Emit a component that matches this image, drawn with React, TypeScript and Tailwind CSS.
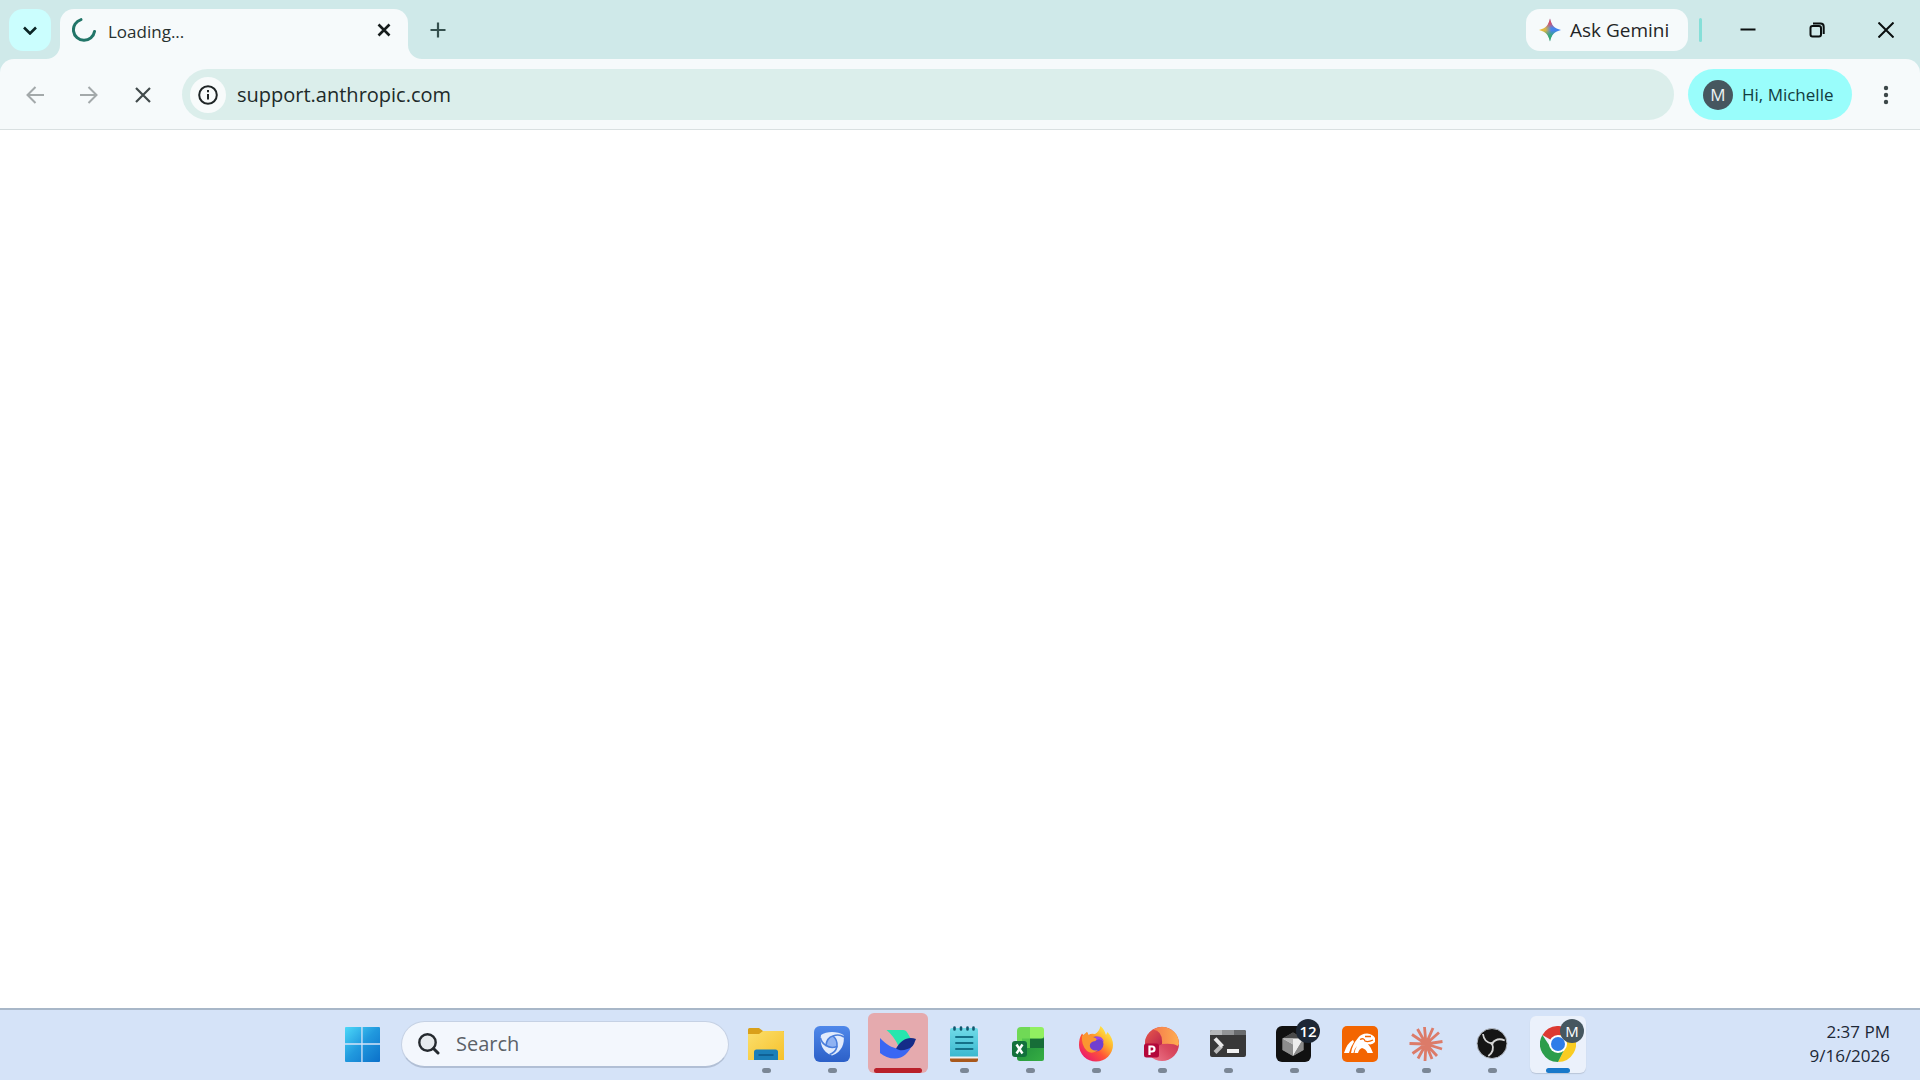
import React from 'react';

interface TaskbarApp {
  name: string;
  icon: React.ReactNode;
  badge?: string;
  state?: 'attention' | 'active';
}

function GeminiIcon() {
  return (
    <svg viewBox="0 0 22 24" className="h-6 w-[22px]">
      <defs>
        <linearGradient id="gem-y" x1="0" x2="1" y1="0" y2="0">
          <stop offset="0" stopColor="#f2c02c" />
          <stop offset="0.3" stopColor="#d8b548" />
          <stop offset="0.55" stopColor="#4a86e8" />
          <stop offset="1" stopColor="#3b7ff0" />
        </linearGradient>
        <linearGradient id="gem-r" x1="0" x2="0" y1="0" y2="1">
          <stop offset="0" stopColor="#ea4358" />
          <stop offset="0.2" stopColor="#d9506a" />
          <stop offset="0.42" stopColor="#d9506a" stopOpacity="0" />
        </linearGradient>
        <linearGradient id="gem-g" x1="0" x2="0" y1="1" y2="0">
          <stop offset="0" stopColor="#2fb457" />
          <stop offset="0.25" stopColor="#37a97c" />
          <stop offset="0.48" stopColor="#37a97c" stopOpacity="0" />
        </linearGradient>
      </defs>
      {['url(#gem-y)', 'url(#gem-r)', 'url(#gem-g)'].map((fill) => (
        <path key={fill} d="M11 0.5C12.2 7 15.5 10.6 22 12C15.5 13.4 12.2 17 11 23.5C9.8 17 6.5 13.4 0 12C6.5 10.6 9.8 7 11 0.5Z" fill={fill} />
      ))}
    </svg>
  );
}

function WindowsLogo() {
  return (
    <svg viewBox="0 0 36 36" className="size-9">
      <defs>
        <linearGradient id="win" x1="0" y1="0" x2="36" y2="36" gradientUnits="userSpaceOnUse">
          <stop offset="0" stopColor="#4fdcfa" />
          <stop offset="0.5" stopColor="#2199de" />
          <stop offset="1" stopColor="#0b70c9" />
        </linearGradient>
      </defs>
      <path fill="url(#win)" d="M2 1H17.300V17.300H1V2A1 1 0 0 1 2 1ZM18.600 1H35A1 1 0 0 1 36 2V17.300H18.600ZM1 18.800H17.300V36H2A1 1 0 0 1 1 35ZM18.600 18.800H36V35A1 1 0 0 1 35 36H18.600Z" />
    </svg>
  );
}

function FolderIcon() {
  return (
    <svg viewBox="0 0 36 36" className="size-9">
      <defs>
        <linearGradient id="fold" x1="0" y1="0" x2="1" y2="1">
          <stop offset="0" stopColor="#fbdf6c" />
          <stop offset="1" stopColor="#f6c12b" />
        </linearGradient>
      </defs>
      <path fill="#d9a01a" d="M0 3.500Q0 2 1.500 2H11L15 5H36V12H0Z" />
      <path fill="url(#fold)" d="M0 8H11L15 5H35Q36 5 36 6V34H0Z" />
      <path fill="#1b7fb8" d="M6 34V26Q6 23.500 8.500 23.500H27.500Q30 23.500 30 26V34Z" />
      <path stroke="#0d5688" strokeWidth="1.500" d="M10.500 29H25.500" />
    </svg>
  );
}

function ShieldIcon() {
  return (
    <svg viewBox="0 0 36 36" className="size-9">
      <defs>
        <linearGradient id="shield" x1="0" y1="0" x2="0" y2="1">
          <stop offset="0" stopColor="#4f88ea" />
          <stop offset="1" stopColor="#2c60c8" />
        </linearGradient>
      </defs>
      <rect width="36" height="36" rx="6" fill="url(#shield)" />
      <path fill="#e2ebfc" d="M18 6C22 6 27 7 29.500 9C31 17 28 26 18 29.500C8 26 5.500 17 7 9C9.500 7 14 6 18 6Z" />
      <g fill="none" stroke="#4a7edc" strokeWidth="1.600">
        <path fill="#8fb2f2" d="M12 19.500C12.500 14.500 15 11 19 10C22 12.500 23.500 16 23 20.500C19 22 15 21.500 12 19.500Z" />
        <path d="M19 10C23 8.500 27 9 30 11M23 20.500C22 25 19 27.500 15.500 28.500M12 19.500C9 17.500 7 15 6.500 12" />
      </g>
    </svg>
  );
}

function WingIcon() {
  return (
    <svg viewBox="0 0 36 36" className="size-9">
      <path fill="#27e6ae" d="M6.500 4H23Q26 4 27.500 7L31 13L19 21Q14 10 6.500 4Z" />
      <path fill="#3a67f3" d="M0 12C6 18.500 12 22 18 22.500C24 23 29 20 33 17C29 27 23 32.500 15 32.500C9 32.500 4 30.500 0 27Z" />
      <path fill="#142c88" d="M36 13C28 10 21 14 16 22.500C21 26 27 23.500 31 21.500C34 19.500 34.500 16 36 13Z" />
    </svg>
  );
}

function NotepadIcon() {
  return (
    <svg viewBox="0 0 36 36" className="size-9">
      <defs>
        <linearGradient id="note" x1="0" y1="0" x2="0" y2="1">
          <stop offset="0" stopColor="#70dbe8" />
          <stop offset="1" stopColor="#3bb8cf" />
        </linearGradient>
      </defs>
      <path fill="#a8581c" d="M4 31H32V34Q32 36 30 36H6Q4 36 4 34Z" />
      <path fill="#f3f0ee" d="M4 29H32V32.500H4Z" />
      <path fill="url(#note)" d="M4 4Q4 2 6 2H30Q32 2 32 4V30.500H4Z" />
      <path stroke="#13576e" strokeWidth="2.600" strokeLinecap="round" d="M8.500 1.500V3.500M15 1.500V3.500M21.500 1.500V3.500M27.500 1.500V3.500" />
      <path stroke="#147088" strokeWidth="2" strokeLinecap="round" d="M10 11H26.500M10 17H26.500M10 23H26.500" />
    </svg>
  );
}

function ExcelIcon() {
  return (
    <svg viewBox="0 0 36 36" className="size-9">
      <defs>
        <linearGradient id="xl" x1="0" y1="0" x2="1" y2="1">
          <stop offset="0" stopColor="#1d8a3c" />
          <stop offset="1" stopColor="#36ae43" />
        </linearGradient>
      </defs>
      <path fill="url(#xl)" d="M5 10H32V33Q32 35 30 35H8Q5 35 5 32Z" />
      <path fill="#176d38" d="M18 12.500H32V22H18Z" />
      <path fill="#70d956" d="M5 22V5Q5 1 9 1H18V22Z" />
      <path fill="#91f061" d="M18 1H29Q32 1 32 4V10Q32 12.500 29 12.500H18Z" />
      <path fill="#55c64e" d="M10 12.500H18V22H10Z" />
      <rect y="15" width="15" height="16" rx="3" fill="#12713c" />
      <path stroke="#fff" strokeWidth="2.400" d="M4.500 18.500L10.500 27.500M10.500 18.500L4.500 27.500" />
    </svg>
  );
}

function FirefoxIcon() {
  return (
    <svg viewBox="0 0 36 36" className="size-9">
      <defs>
        <linearGradient id="ff" x1="0.9" y1="0.1" x2="0.2" y2="0.9">
          <stop offset="0" stopColor="#fff04b" />
          <stop offset="0.35" stopColor="#ffae2b" />
          <stop offset="0.65" stopColor="#ff5338" />
          <stop offset="1" stopColor="#ed1f68" />
        </linearGradient>
      </defs>
      <path fill="url(#ff)" d="M4 7.500L6 10L9 6L10.500 9Q13 7 17 8Q21 6 22.500 0C26 3 27 6 28 9L29.500 6Q35 12 35 19A17 16.500 0 0 1 1 19Q1 12 4 7.500Z" />
      <circle cx="18" cy="18" r="7.500" fill="#7040cf" />
      <path fill="#fb9630" d="M4 10L9 6L10.500 9Q13 9 15 11L19.500 12.500Q18 15.500 15 15.500Q11 17 12 21Q14 25.500 20 24Q14 29 9 25Q3 19 4 10Z" />
      <path fill="#9b47e8" d="M17 11Q24 9 26 16Q22 12 19 14Z" />
    </svg>
  );
}

function PowerPointIcon() {
  return (
    <svg viewBox="0 0 36 36" className="size-9">
      <defs>
        <linearGradient id="pp" x1="0" y1="0" x2="1" y2="0">
          <stop offset="0" stopColor="#f47a4c" />
          <stop offset="1" stopColor="#ffae50" />
        </linearGradient>
        <linearGradient id="pp2" x1="0" y1="0" x2="0.8" y2="1">
          <stop offset="0" stopColor="#e85a4a" />
          <stop offset="1" stopColor="#b81f4e" />
        </linearGradient>
        <linearGradient id="pp3" x1="1" y1="0" x2="0" y2="1">
          <stop offset="0" stopColor="#c92648" />
          <stop offset="0.5" stopColor="#d94a60" />
          <stop offset="1" stopColor="#f28498" />
        </linearGradient>
      </defs>
      <circle cx="18" cy="18" r="17" fill="url(#pp3)" />
      <path fill="url(#pp)" d="M9 3.500A17 17 0 0 1 35 18L33.500 20Q30 17 18 18Z" />
      <path fill="url(#pp2)" d="M9 3.500Q19 5 18 18L3 26Q-3 11 9 3.500Z" />
      <rect y="17.500" width="15" height="14" rx="2.500" fill="#b4083b" />
      <path fill="none" stroke="#fff" strokeWidth="2.200" d="M5.500 29V20.500H8A2.400 2.400 0 0 1 8 25.500H5.500" />
    </svg>
  );
}

function TerminalIcon() {
  return (
    <svg viewBox="0 0 36 36" className="size-9">
      <rect y="4" width="36" height="27" rx="2" fill="#383838" />
      <path fill="#b5b7b9" d="M0 9V6Q0 4 2 4H12V9Z" />
      <path fill="#929496" d="M12 4H24V9H12Z" />
      <path fill="#696b6d" d="M24 4H34Q36 4 36 6V9H24Z" />
      <path fill="none" stroke="#b9b9b9" strokeWidth="4" d="M5 26.500L11.500 20" />
      <path fill="none" stroke="#e9e9e9" strokeWidth="4" d="M5 12.500L12.500 20.500" />
      <path fill="#f1f1f1" d="M17 23H29V27H17Z" />
    </svg>
  );
}

function CubeIcon() {
  return (
    <svg viewBox="0 0 36 36" className="size-9">
      <rect width="35" height="36" rx="6" fill="#111" />
      <path fill="#777" d="M17 6.500L27.500 12.500V24L17 30L6.500 24V12.500Z" />
      <path fill="#4a4a4a" d="M17 6.500L27.500 12.500H6.500Z" />
      <path fill="#8d8d8d" d="M6.500 12.500L17 19V30L6.500 24Z" />
      <path fill="#ededed" d="M6.500 12.500H27.500L17 30V18.500Z" />
      <path fill="#8a8a8a" d="M27.500 12.500V24L17 30Z" />
      <path fill="#b9b9b9" d="M6.500 12.500H17V18.500Z" />
    </svg>
  );
}

function BeastIcon() {
  return (
    <svg viewBox="0 0 36 36" className="size-9">
      <rect width="36" height="36" rx="5" fill="#f36500" />
      <path fill="#fff" d="M2 27Q5 17 11 14L12 16Q9 20 7 27Z" />
      <path fill="#fff" d="M9 27Q10 19 16 12Q19 7.500 25 7.500Q31 8 33 12V16Q30 19.500 26 18Q29.500 22 31 27H25.500Q24 23 20 22Q17 23 16 27H12.500Q13 23 15 20Q12 23 11.500 27Z" />
      <path fill="none" stroke="#f36500" strokeWidth="1.300" d="M18 13.500Q22 11.500 23 15Q26 16.500 31 14M23 10.500H29" />
    </svg>
  );
}

function BurstIcon() {
  return (
    <svg viewBox="0 0 36 36" className="size-9">
      <path
        stroke="#dc7b69"
        strokeWidth="2.800"
        d="M18 18L16.500 1M18 18L25 2M18 18L31 6.500M18 18L34.500 15.500M18 18L34 23M18 18L29 30M18 18L24 33M18 18L17 35M18 18L10 32.500M18 18L4.500 27.500M18 18L1.500 17.500M18 18L4 8.500M18 18L9.500 3"
      />
    </svg>
  );
}

function ObsIcon() {
  return (
    <svg viewBox="0 0 36 36" className="size-9">
      <circle cx="18" cy="17.500" r="15" fill="#151515" stroke="#b4bac3" />
      <g fill="none" stroke="#d4d4d4" strokeWidth="1.800">
        {[0, 120, 240].map((a) => (
          <path key={a} d="M18 17.500Q10 16.500 9 8" transform={`rotate(${a} 18 17.5)`} />
        ))}
      </g>
      <circle cx="18" cy="17.500" r="1.500" fill="#d4d4d4" />
    </svg>
  );
}

function ChromeIcon() {
  return (
    <svg viewBox="0 0 36 36" className="size-9">
      <path fill="#dc3a32" d="M18 18L2.400 9A18 18 0 0 1 33.600 9L18 10Z" />
      <path fill="#f9cc22" d="M33.600 9A18 18 0 0 1 18 36L25 22L18 9Z" />
      <path fill="#2b9d4b" d="M18 36A18 18 0 0 1 2.400 9L11 22L25 22Z" />
      <circle cx="18" cy="18" r="9" fill="#fff" />
      <circle cx="18" cy="18" r="7" fill="#2e7de9" />
    </svg>
  );
}

const apps: TaskbarApp[] = [
  { name: 'File Explorer', icon: <FolderIcon /> },
  { name: 'Security', icon: <ShieldIcon /> },
  { name: 'Wing', icon: <WingIcon />, state: 'attention' },
  { name: 'Notepad', icon: <NotepadIcon /> },
  { name: 'Excel', icon: <ExcelIcon /> },
  { name: 'Firefox', icon: <FirefoxIcon /> },
  { name: 'PowerPoint', icon: <PowerPointIcon /> },
  { name: 'Terminal', icon: <TerminalIcon /> },
  { name: 'Cursor', icon: <CubeIcon />, badge: '12' },
  { name: 'Beast', icon: <BeastIcon /> },
  { name: 'Claude', icon: <BurstIcon /> },
  { name: 'OBS Studio', icon: <ObsIcon /> },
  { name: 'Chrome', icon: <ChromeIcon />, badge: 'M', state: 'active' },
];

function TabStrip() {
  return (
    <header className="flex h-[59px] items-start bg-[#cfe9e9] pt-[9px]">
      <button aria-label="Search tabs" className="ml-[9px] grid size-[42px] place-items-center rounded-[14px] bg-[#cbfefe]">
        <svg viewBox="0 0 14 9" className="h-[9px] w-3.5" fill="none" stroke="#0b2424" strokeWidth="2.600">
          <path d="M1 1.500L7 7.500L13 1.500" />
        </svg>
      </button>
      <div className="relative ml-[9px] flex h-[50px] w-[348px] items-start rounded-t-[14px] bg-[#f6fafb]">
        {/* curved feet joining the tab to the toolbar */}
        <svg viewBox="0 0 14 14" className="absolute right-full bottom-0 size-3.5" fill="#f6fafb">
          <path d="M14 0V14H0A14 14 0 0 0 14 0Z" />
        </svg>
        <svg viewBox="0 0 14 14" className="absolute bottom-0 left-full size-3.5" fill="#f6fafb">
          <path d="M0 0V14H14A14 14 0 0 1 0 0Z" />
        </svg>
        <div className="flex h-[42px] w-full items-center pr-[17px] pl-3">
          <svg viewBox="0 0 24 24" className="size-6" fill="none" stroke="#217568" strokeWidth="3" strokeLinecap="round">
            <path d="M9 1.600A10.600 10.600 0 1 0 22.500 13.500" />
          </svg>
          <span className="ml-3 pt-1 text-[17px] leading-6 text-[#27302f]">Loading...</span>
          <button aria-label="Close tab" className="ml-auto">
            <svg viewBox="0 0 14 14" className="size-3.5" stroke="#161c1c" strokeWidth="2.600">
              <path d="M1.500 1.500L12.500 12.500M12.500 1.500L1.500 12.500" />
            </svg>
          </button>
        </div>
      </div>
      <button aria-label="New tab" className="ml-[9px] grid size-[42px] place-items-center">
        <svg viewBox="0 0 16 16" className="size-4" stroke="#35504e" strokeWidth="2.200">
          <path d="M8 0.500V15.500M0.500 8H15.500" />
        </svg>
      </button>
      <button className="ml-auto flex h-[42px] w-[162px] items-center gap-[9px] rounded-[14px] bg-[#f6fafb] pl-[13px] text-[19px] font-medium text-[#1f2526]">
        <GeminiIcon />
        <span className="whitespace-nowrap">Ask Gemini</span>
      </button>
      <div className="mt-[9px] ml-[11px] h-6 w-[3px] rounded-full bg-[#86dfd8]" />
      <div className="ml-[11px] flex h-[42px]">
        <button aria-label="Minimize" className="grid w-[69px] place-items-center">
          <svg viewBox="0 0 16 16" className="size-4" stroke="#0a0f0f" strokeWidth="2">
            <path d="M0.500 7.500H15.500" />
          </svg>
        </button>
        <button aria-label="Restore" className="grid w-[69px] place-items-center">
          <svg viewBox="0 0 16 16" className="size-4" fill="none" stroke="#0a0f0f" strokeWidth="2">
            <rect x="1.500" y="4" width="10.500" height="10.500" rx="2" />
            <path d="M4 1.500H11.500Q14.700 1.500 14.700 4.700V12" />
          </svg>
        </button>
        <button aria-label="Close window" className="grid w-[69px] place-items-center">
          <svg viewBox="0 0 16 16" className="size-4" stroke="#0a0f0f" strokeWidth="2">
            <path d="M0.500 0.500L15.500 15.500M15.500 0.500L0.500 15.500" />
          </svg>
        </button>
      </div>
    </header>
  );
}

function Toolbar() {
  return (
    <div className="bg-[#cfe9e9]">
      <nav className="flex h-[71px] items-center rounded-t-[14px] border-b border-[#d9e0e1] bg-[#f6fafb] pt-px pl-2">
        <button disabled aria-label="Back" className="grid h-[51px] w-[54px] place-items-center">
          <svg viewBox="0 0 18 18" className="size-[18px]" fill="none" stroke="#a3a9aa" strokeWidth="2">
            <path d="M18 9H1.500M9.500 1L1.500 9L9.500 17" />
          </svg>
        </button>
        <button disabled aria-label="Forward" className="grid h-[51px] w-[54px] place-items-center">
          <svg viewBox="0 0 18 18" className="size-[18px]" fill="none" stroke="#a3a9aa" strokeWidth="2">
            <path d="M0 9H16.500M8.500 1L16.500 9L8.500 17" />
          </svg>
        </button>
        <button aria-label="Stop" className="grid h-[51px] w-[54px] place-items-center">
          <svg viewBox="0 0 16 16" className="size-4" stroke="#414a4b" strokeWidth="2.200">
            <path d="M1 1L15 15M15 1L1 15" />
          </svg>
        </button>
        <div className="ml-3 flex h-[51px] flex-1 items-center rounded-full bg-[#dbeeeb] pl-2">
          <button aria-label="View site information" className="grid size-9 place-items-center rounded-full bg-[#f8fbfb]">
            <svg viewBox="0 0 20 20" className="size-5" fill="none" stroke="#1f2526" strokeWidth="2">
              <circle cx="10" cy="10" r="8.800" />
              <path d="M10 9V14.500M10 5V7.200" />
            </svg>
          </button>
          <input aria-label="Address" defaultValue="support.anthropic.com" className="ml-[11px] h-8 min-w-0 flex-1 bg-transparent text-[20px] text-[#202a29] outline-none" />
        </div>
        <button className="ml-3.5 flex h-[51px] w-[164px] items-center rounded-full bg-[#99fdfb] pl-[15px] text-[#123c40]">
          <span className="grid size-[30px] place-items-center rounded-full bg-[#46575f] text-[17px] text-[#eef3f4]">M</span>
          <span className="ml-[9px] text-[17px] whitespace-nowrap">Hi, Michelle</span>
        </button>
        <button aria-label="Menu" className="grid h-[51px] w-[68px] place-items-center">
          <svg viewBox="0 0 6 20" className="h-5 w-1.5" fill="#3c4748">
            <circle cx="3" cy="3" r="2.200" />
            <circle cx="3" cy="10" r="2.200" />
            <circle cx="3" cy="17" r="2.200" />
          </svg>
        </button>
      </nav>
    </div>
  );
}

function AppButton({ app }: { app: TaskbarApp }) {
  let tile = 'h-[57px] w-14';
  let pill = 'h-[5px] w-[9px] bg-[#7b8796]';
  if (app.state === 'attention') {
    tile = 'h-[60px] w-[60px] bg-[#e5aaae]';
    pill = 'h-[5px] w-12 bg-[#b9202a]';
  } else if (app.state === 'active') {
    tile = 'h-[57px] w-14 bg-[#ebf1fb] shadow-[0_1px_1px_#b9c5d8]';
    pill = 'h-[5px] w-6 bg-[#1979ca]';
  }

  return (
    <button aria-label={app.name} className="flex h-[63px] w-[66px] items-end justify-center">
      <span className={`flex flex-col items-center justify-end rounded-md ${tile}`}>
        <span className="relative">
          {app.icon}
          {app.badge && (
            <span
              className={`absolute -top-[7px] -right-2 grid size-6 place-items-center rounded-full text-white ${
                app.badge === 'M' ? 'bg-[#46575f] text-[15px]' : 'bg-[#1d2735] text-[15px] font-semibold'
              }`}
            >
              {app.badge}
            </span>
          )}
        </span>
        <span className={`mt-1.5 rounded-full ${pill}`} />
      </span>
    </button>
  );
}

function Taskbar() {
  return (
    <footer className="grid h-[72px] grid-cols-[1fr_auto_1fr] border-t-2 border-[#a8b7c8] bg-[#d5e3f8] pb-0.5">
      <div />
      <div className="flex">
        <button aria-label="Start" className="grid w-[66px] place-items-center">
          <WindowsLogo />
        </button>
        <label className="mt-[11px] mr-1 ml-1.5 flex h-[47px] w-[328px] items-center rounded-full border border-b-2 border-[#c5d1e4] border-b-[#b1bfd5] bg-[#f3f7fd] pl-4">
          <svg viewBox="0 0 22 22" className="size-[22px] shrink-0" fill="#e6eaee" stroke="#24292e" strokeWidth="2.400">
            <circle cx="9.500" cy="9.500" r="8.200" />
            <path strokeWidth="3" strokeLinecap="round" d="M15.500 15.500L20 20" />
          </svg>
          <input aria-label="Search" placeholder="Search" className="ml-4 w-full min-w-0 bg-transparent text-[20px] outline-none placeholder:text-[#5b6168]" />
        </label>
        {apps.map((app) => (
          <AppButton key={app.name} app={app} />
        ))}
      </div>
      <time className="flex flex-col items-end justify-center pr-[30px] text-[17px] leading-6 text-[#1c2736]">
        <span>2:37 PM</span>
        <span>9/16/2026</span>
      </time>
    </footer>
  );
}

export default function App() {
  return (
    <div className="flex h-screen flex-col bg-white font-['Open_Sans','Noto_Sans',sans-serif]">
      <TabStrip />
      <Toolbar />
      <main className="flex-1 bg-white" />
      <Taskbar />
    </div>
  );
}
